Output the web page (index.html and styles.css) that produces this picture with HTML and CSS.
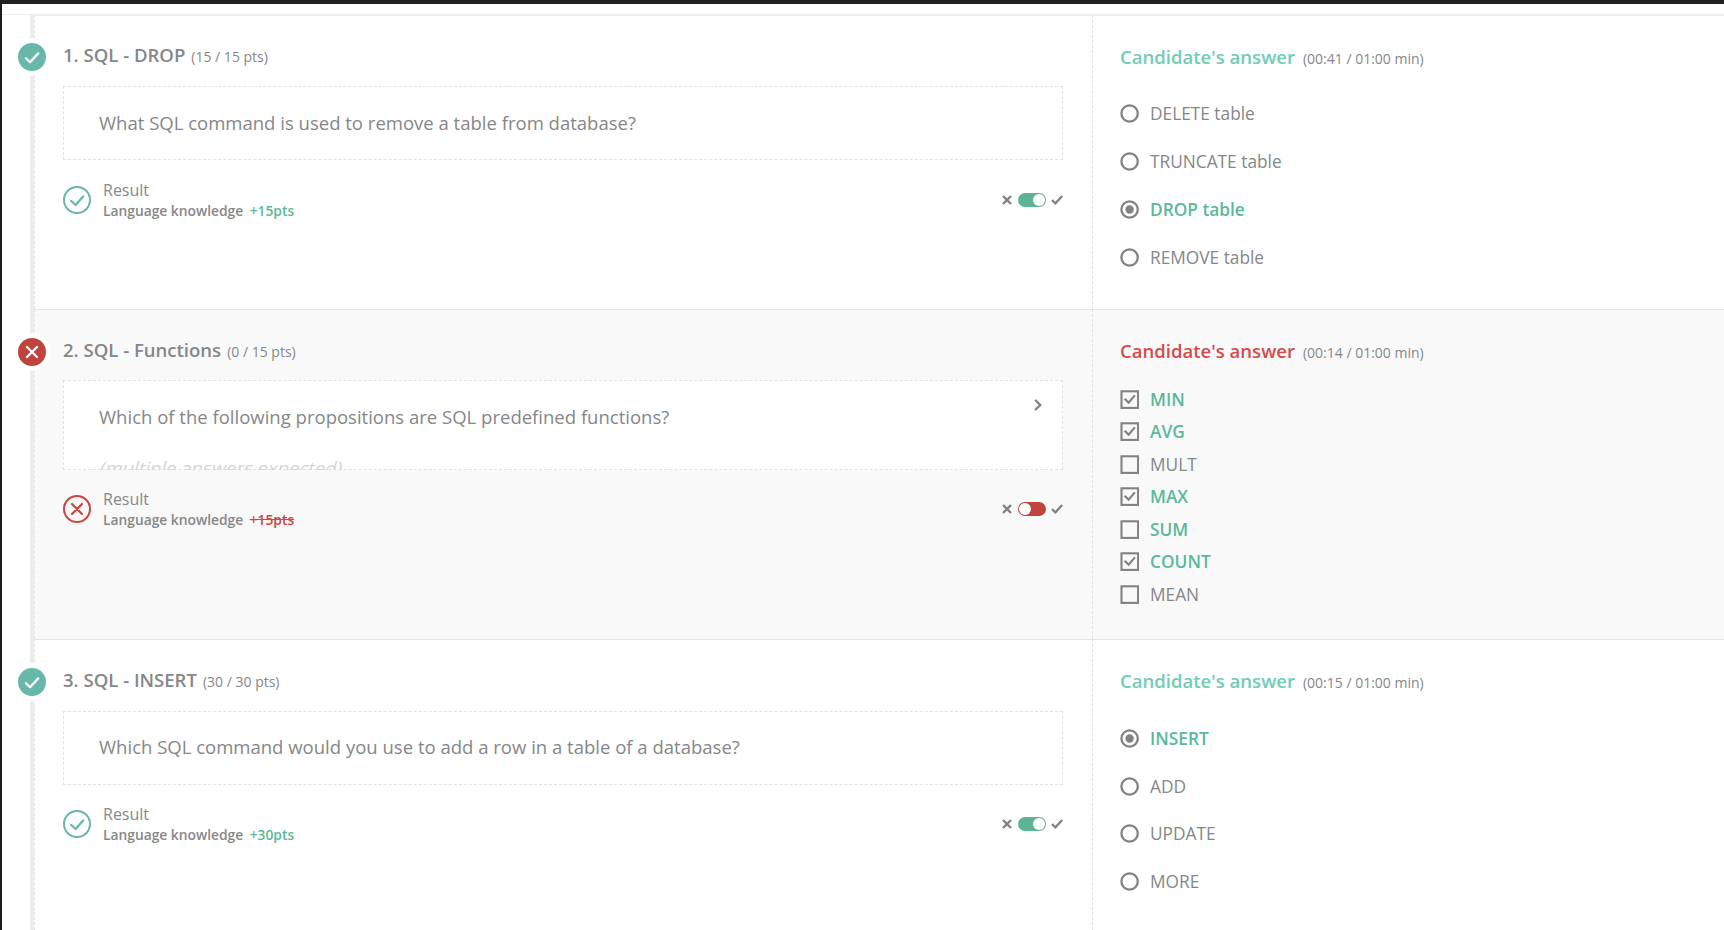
FILE: index.html
```html
<!DOCTYPE html>
<html lang="en">
<head>
<meta charset="utf-8">
<title>Candidate report</title>
<link rel="stylesheet" href="styles.css">
</head>
<body>
<svg class="defs" aria-hidden="true">
  <symbol id="badge-check" viewBox="0 0 28 28"><circle cx="14" cy="14" r="14" fill="#68b8a9"/><path d="M8 15.2l4 4 8.2-8.8" fill="none" stroke="#fff" stroke-width="2.3" stroke-linecap="round" stroke-linejoin="round"/></symbol>
  <symbol id="badge-cross" viewBox="0 0 28 28"><circle cx="14" cy="14" r="14" fill="#c0443e"/><path d="M9 9l10 10M19 9L9 19" stroke="#fff" stroke-width="2.3" stroke-linecap="round"/></symbol>
  <symbol id="ring-check" viewBox="0 0 28 28"><circle cx="14" cy="14" r="13" fill="none" stroke="#68b8a9" stroke-width="2"/><path d="M8 14.8l4.6 4.2 7.6-8.6" fill="none" stroke="#68b8a9" stroke-width="2.2" stroke-linecap="round" stroke-linejoin="round"/></symbol>
  <symbol id="ring-cross" viewBox="0 0 28 28"><circle cx="14" cy="14" r="13" fill="none" stroke="#c9473f" stroke-width="2"/><path d="M9 9l10 10M19 9L9 19" stroke="#c9473f" stroke-width="2.2" stroke-linecap="round"/></symbol>
  <symbol id="x" viewBox="0 0 10 10"><path d="M1 1l8 8M9 1L1 9" stroke="#808284" stroke-width="2.4"/></symbol>
  <symbol id="tick" viewBox="0 0 12 10"><path d="M1 5.2l3.4 3.2L11.2 1" fill="none" stroke="#808284" stroke-width="2.3"/></symbol>
  <symbol id="radio" viewBox="0 0 19 19"><circle cx="9.6" cy="9.5" r="8.2" fill="#fff" stroke="#808284" stroke-width="2.3"/></symbol>
  <symbol id="radio-on" viewBox="0 0 19 19"><circle cx="9.6" cy="9.5" r="8.2" fill="#fff" stroke="#808284" stroke-width="2.3"/><circle cx="9.6" cy="9.5" r="4.2" fill="#808284"/></symbol>
  <symbol id="box" viewBox="0 0 19 19"><rect x="1.5" y="1.3" width="16.6" height="16.6" fill="none" stroke="#808284" stroke-width="2.1"/></symbol>
  <symbol id="box-on" viewBox="0 0 19 19"><rect x="1.5" y="1.3" width="16.6" height="16.6" fill="none" stroke="#808284" stroke-width="2.1"/><path d="M4.6 8.8l4 3.8 6.3-7.2" fill="none" stroke="#808284" stroke-width="2.2"/></symbol>
</svg>
<main class="report">
  <section class="question first">
    <div class="rail"><span class="badge"><svg><use href="#badge-check"/></svg></span></div>
    <div class="prompt">
      <h2 class="title"><span>1. SQL - DROP</span> <small>(15 / 15 pts)</small></h2>
      <div class="card"><p>What SQL command is used to remove a table from database?</p></div>
      <div class="result">
        <svg class="ring"><use href="#ring-check"/></svg>
        <div class="score"><div class="label">Result</div><div class="skill"><span>Language knowledge</span> <span class="pts">+15pts</span></div></div>
        <div class="switch"><svg class="x"><use href="#x"/></svg><span class="toggle on"></span><svg class="tick"><use href="#tick"/></svg></div>
      </div>
    </div>
    <div class="answer">
      <h3 class="heading"><span>Candidate's answer</span> <small>(00:41 / 01:00 min)</small></h3>
      <ul class="options radios">
        <li><svg><use href="#radio"/></svg><span>DELETE table</span></li>
        <li><svg><use href="#radio"/></svg><span>TRUNCATE table</span></li>
        <li class="correct"><svg><use href="#radio-on"/></svg><span>DROP table</span></li>
        <li><svg><use href="#radio"/></svg><span>REMOVE table</span></li>
      </ul>
    </div>
  </section>

  <section class="question failed">
    <div class="rail"><span class="badge"><svg><use href="#badge-cross"/></svg></span></div>
    <div class="prompt">
      <h2 class="title"><span>2. SQL - Functions</span> <small>(0 / 15 pts)</small></h2>
      <div class="card folded">
        <p>Which of the following propositions are SQL predefined functions?</p>
        <p class="hint"><span>(multiple answers expected)</span></p>
        <svg class="chevron" viewBox="0 0 8 12"><path d="M1.2 1l5 5-5 5" fill="none" stroke="#808284" stroke-width="2.4"/></svg>
      </div>
      <div class="result">
        <svg class="ring"><use href="#ring-cross"/></svg>
        <div class="score"><div class="label">Result</div><div class="skill"><span>Language knowledge</span> <span class="pts">+15pts</span></div></div>
        <div class="switch"><svg class="x"><use href="#x"/></svg><span class="toggle"></span><svg class="tick"><use href="#tick"/></svg></div>
      </div>
    </div>
    <div class="answer">
      <h3 class="heading"><span>Candidate's answer</span> <small>(00:14 / 01:00 min)</small></h3>
      <ul class="options boxes">
        <li class="correct"><svg><use href="#box-on"/></svg><span>MIN</span></li>
        <li class="correct"><svg><use href="#box-on"/></svg><span>AVG</span></li>
        <li><svg><use href="#box"/></svg><span>MULT</span></li>
        <li class="correct"><svg><use href="#box-on"/></svg><span>MAX</span></li>
        <li class="correct"><svg><use href="#box"/></svg><span>SUM</span></li>
        <li class="correct"><svg><use href="#box-on"/></svg><span>COUNT</span></li>
        <li><svg><use href="#box"/></svg><span>MEAN</span></li>
      </ul>
    </div>
  </section>

  <section class="question last">
    <div class="rail"><span class="badge"><svg><use href="#badge-check"/></svg></span></div>
    <div class="prompt">
      <h2 class="title"><span>3. SQL - INSERT</span> <small>(30 / 30 pts)</small></h2>
      <div class="card"><p>Which SQL command would you use to add a row in a table of a database?</p></div>
      <div class="result">
        <svg class="ring"><use href="#ring-check"/></svg>
        <div class="score"><div class="label">Result</div><div class="skill"><span>Language knowledge</span> <span class="pts">+30pts</span></div></div>
        <div class="switch"><svg class="x"><use href="#x"/></svg><span class="toggle on"></span><svg class="tick"><use href="#tick"/></svg></div>
      </div>
    </div>
    <div class="answer">
      <h3 class="heading"><span>Candidate's answer</span> <small>(00:15 / 01:00 min)</small></h3>
      <ul class="options radios">
        <li class="correct"><svg><use href="#radio-on"/></svg><span>INSERT</span></li>
        <li><svg><use href="#radio"/></svg><span>ADD</span></li>
        <li><svg><use href="#radio"/></svg><span>UPDATE</span></li>
        <li><svg><use href="#radio"/></svg><span>MORE</span></li>
      </ul>
    </div>
  </section>
</main>
</body>
</html>
```
FILE: styles.css
```css
* { box-sizing: border-box; margin: 0; padding: 0; }
body {
  height: 930px;
  overflow: hidden;
  background: #fff;
  border-top: 4px solid #222122;
  border-left: 2px solid #1c1b1d;
  color: #858789;
  font-family: "Open Sans", sans-serif;
}
svg { display: block; flex: none; }
.defs { position: absolute; width: 0; height: 0; }
.report { margin-top: 10px; border-top: 1px solid #eee; }
.question {
  display: grid;
  grid-template-columns: 32px 1059px 1fr;
  height: 294px;
}
.question.failed { height: 330px; }
.question.last { height: 291px; }
.rail {
  position: relative;
  background: linear-gradient(#ececec, #ececec) 28px 0 / 4px 100% no-repeat;
}
.badge {
  position: absolute;
  left: 11px;
  top: 23px;
  width: 38px;
  height: 38px;
  padding: 5px;
  border-radius: 50%;
  background: #fff;
}
.failed .badge, .last .badge { top: 23.5px; }
.badge svg { width: 28px; height: 28px; }
.prompt, .answer { border-top: 1px solid #e4e4e4; }
.first .prompt, .first .answer { border-top-color: #eee; }
.prompt {
  padding: 28px 29px 0 28px;
  border-left: 1px dashed #e6e6e6;
  border-right: 1px dashed #e2e2e2;
}
.answer { padding: 29px 0 0 27px; }
.failed .prompt, .failed .answer { background: #f9f9f9; }
.title, .heading { display: flex; align-items: baseline; line-height: 24px; font-size: 18.55px; font-weight: 600; }
.title { height: 42px; gap: 6px; }
.first .title { height: 43px; margin-top: -1px; }
.heading { height: 41px; gap: 8px; color: #70cdb5; }
.title small, .heading small { color: #858789; font-size: 14px; font-weight: 400; }
.failed .heading { color: #d6494a; }
.card {
  position: relative;
  height: 74px;
  padding: 22px 35px 0;
  border: 1px dashed #e2e2e2;
  background: #fff;
  font-size: 18.53px;
  line-height: 27px;
}
.last .card { margin-top: 1px; padding-top: 21px; }
.card.folded { height: 90px; }
.hint {
  position: absolute;
  left: 30px;
  top: 73px;
  height: 16px;
  padding: 0 5px;
  overflow: hidden;
  color: #d4d5d6;
}
.hint span { display: inline-block; transform: skewX(-14deg); transform-origin: 0 75%; }
.chevron { position: absolute; right: 20px; top: 18px; width: 8px; height: 12px; }
.result { display: flex; align-items: center; height: 42px; margin-top: 19px; }
.failed .result, .last .result { margin-top: 18px; }
.ring { width: 28px; height: 28px; margin-right: 12px; }
.label { font-size: 16px; line-height: 21px; }
.skill { display: flex; gap: 6.5px; font-size: 13.8px; line-height: 20px; font-weight: 600; }
.pts { color: #5ab998; }
.failed .pts { color: #cf4642; text-decoration: line-through; }
.switch { display: flex; align-items: center; gap: 5.5px; margin-left: auto; }
.x { width: 10px; height: 10px; }
.tick { width: 12px; height: 10px; }
.toggle { display: flex; width: 28px; height: 14px; padding: 1px; border-radius: 7px; background: #c0443e; }
.toggle::before { content: ""; width: 12px; height: 12px; border-radius: 50%; background: #fff; }
.toggle.on { justify-content: flex-end; background: #5bb593; }
.options { padding-top: 4px; list-style: none; font-size: 17.3px; }
.options li { display: flex; align-items: center; gap: 11px; }
.options svg { width: 19px; height: 19px; }
.radios li { height: 47.8px; }
.last .options { padding-top: 4.5px; }
.boxes { padding-top: 3.2px; }
.boxes li { height: 32.5px; }
.correct { color: #5ab998; font-weight: 600; }
```
